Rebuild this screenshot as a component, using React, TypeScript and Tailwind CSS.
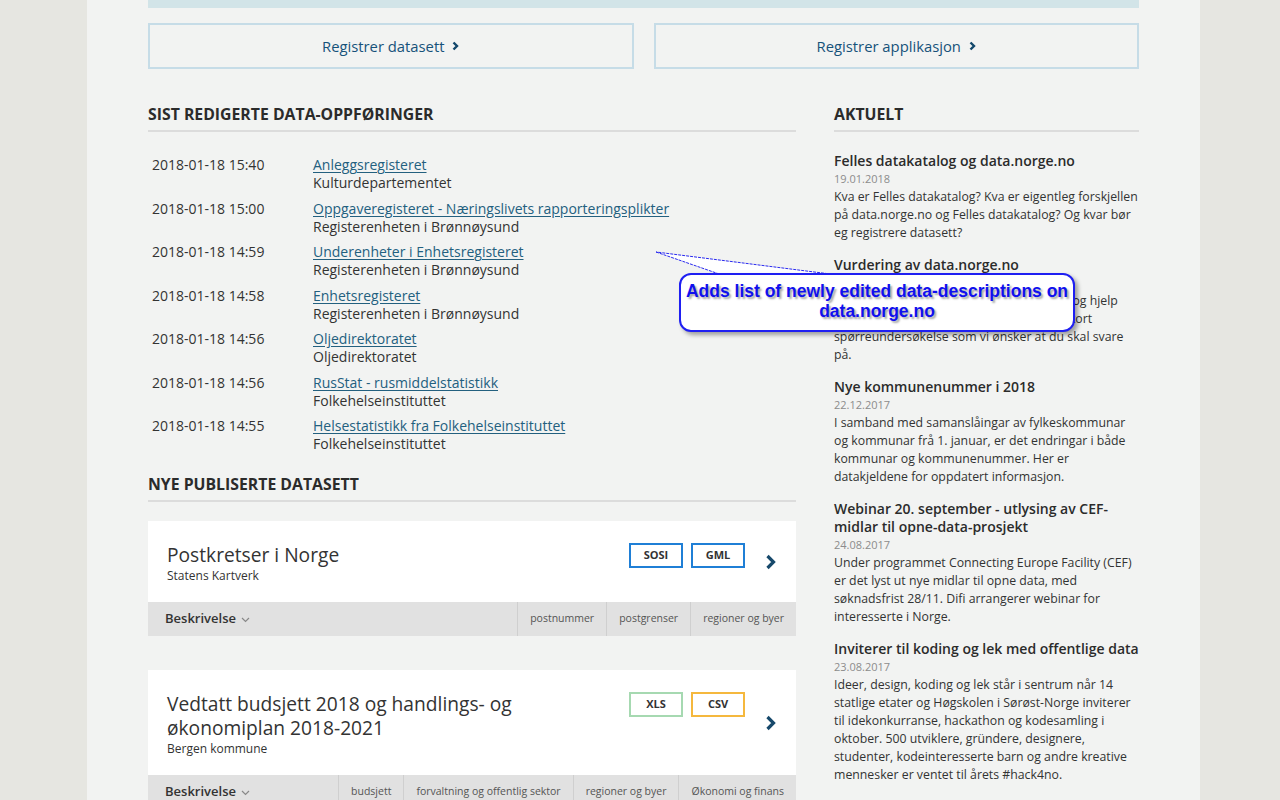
import React from "react";

const recent = [
  ["2018-01-18 15:40", "Anleggsregisteret", "Kulturdepartementet"],
  ["2018-01-18 15:00", "Oppgaveregisteret - Næringslivets rapporteringsplikter", "Registerenheten i Brønnøysund"],
  ["2018-01-18 14:59", "Underenheter i Enhetsregisteret", "Registerenheten i Brønnøysund"],
  ["2018-01-18 14:58", "Enhetsregisteret", "Registerenheten i Brønnøysund"],
  ["2018-01-18 14:56", "Oljedirektoratet", "Oljedirektoratet"],
  ["2018-01-18 14:56", "RusStat - rusmiddelstatistikk", "Folkehelseinstituttet"],
  ["2018-01-18 14:55", "Helsestatistikk fra Folkehelseinstituttet", "Folkehelseinstituttet"],
];

const news = [
  {
    title: "Felles datakatalog og data.norge.no",
    date: "19.01.2018",
    body: "Kva er Felles datakatalog? Kva er eigentleg forskjellen på data.norge.no og Felles datakatalog? Og kvar bør eg registrere datasett?",
  },
  {
    title: "Vurdering av data.norge.no",
    date: "15.01.2018",
    body: "Vi vil gjerne bli betre. Bli med som brukar og hjelp oss å forbetre tenesta ved å svare på ein kort spørreundersøkelse som vi ønsker at du skal svare på.",
  },
  {
    title: "Nye kommunenummer i 2018",
    date: "22.12.2017",
    body: "I samband med samanslåingar av fylkeskommunar og kommunar frå 1. januar, er det endringar i både kommunar og kommunenummer. Her er datakjeldene for oppdatert informasjon.",
  },
  {
    title: "Webinar 20. september - utlysing av CEF-midlar til opne-data-prosjekt",
    date: "24.08.2017",
    body: "Under programmet Connecting Europe Facility (CEF) er det lyst ut nye midlar til opne data, med søknadsfrist 28/11. Difi arrangerer webinar for interesserte i Norge.",
  },
  {
    title: "Inviterer til koding og lek med offentlige data",
    date: "23.08.2017",
    body: "Ideer, design, koding og lek står i sentrum når 14 statlige etater og Høgskolen i Sørøst-Norge inviterer til idekonkurranse, hackathon og kodesamling i oktober. 500 utviklere, gründere, designere, studenter, kodeinteresserte barn og andre kreative mennesker er ventet til årets #hack4no.",
  },
  {
    title: "Nytt datasett frå Statistisk sentralbyrå",
    date: "10.08.2017",
    body: "SSB har publisert nye datasett.",
  },
];

const cards = [
  {
    title: "Postkretser i Norge",
    org: "Statens Kartverk",
    badges: [
      ["SOSI", "border-[#1f7fd6]"],
      ["GML", "border-[#1f7fd6]"],
    ],
    tags: ["postnummer", "postgrenser", "regioner og byer"],
  },
  {
    title: "Vedtatt budsjett 2018 og handlings- og økonomiplan 2018-2021",
    org: "Bergen kommune",
    badges: [
      ["XLS", "border-[#a6d9b1]"],
      ["CSV", "border-[#f5b83d]"],
    ],
    tags: ["budsjett", "forvaltning og offentlig sektor", "regioner og byer", "Økonomi og finans"],
  },
];

function SmallChevron() {
  return (
    <svg width="7" height="10" viewBox="0 0 7 10" className="ml-[8px]">
      <path d="M1.5 1.5 L5 5 L1.5 8.5" fill="none" stroke="#12476b" strokeWidth="2.4" />
    </svg>
  );
}

function Heading({ children }: { children: React.ReactNode }) {
  return (
    <h2 className="text-[15.8px] leading-[22px] font-bold text-[#2b2b2b] pb-[5px] border-b-2 border-[#dcdcdc]">
      {children}
    </h2>
  );
}

export default function App() {
  return (
    <div className="relative min-h-[800px] bg-[#e6e6e1] font-['Open_Sans',sans-serif] text-[#333] overflow-hidden">
      <div className="ml-[87px] w-[1113px] bg-[#f2f3f2] px-[61px] pb-10">
        <div className="h-[8px] bg-[#d2e4e8]" />

        <div className="mt-[15px] grid grid-cols-2 gap-[20px]">
          {["Registrer datasett", "Registrer applikasjon"].map((t) => (
            <a
              key={t}
              className="h-[46px] flex items-center justify-center border-2 border-[#c6dce7] text-[14.8px] text-[#16527a]"
            >
              {t}
              <SmallChevron />
            </a>
          ))}
        </div>

        <div className="mt-[34px] flex gap-[38px]">
          {/* left column */}
          <div className="w-[648px]">
            <Heading>SIST REDIGERTE DATA-OPPFØRINGER</Heading>
            <div className="mt-[24px] flex flex-col gap-[7.5px] text-[14px] leading-[18px]">
              {recent.map(([d, title, org], i) => (
                <div key={i} className="flex">
                  <div className="w-[165px] pl-[4px] text-[#333]">{d}</div>
                  <div>
                    <a className="text-[#23607f] underline underline-offset-[2px] decoration-[#23607f]">{title}</a>
                    <div className="text-[#333]">{org}</div>
                  </div>
                </div>
              ))}
            </div>

            <div className="mt-[20px]">
              <Heading>NYE PUBLISERTE DATASETT</Heading>
            </div>

            <div className="mt-[19px] flex flex-col gap-[34px]">
              {cards.map((c) => (
                <div key={c.title}>
                  <div className="bg-white flex pl-[19px] pr-[19px] pt-[22px] pb-[17px]">
                    <div className="flex-1 pr-[40px]">
                      <div className="text-[19.2px] leading-[24px] text-[#333] max-w-[400px]">{c.title}</div>
                      <div className="text-[12px] leading-[18px] text-[#333]">{c.org}</div>
                    </div>
                    <div className="flex gap-[8px] self-start">
                      {c.badges.map(([b, cls]) => (
                        <div
                          key={b}
                          className={`w-[54px] h-[25px] border-2 ${cls} flex items-center justify-center text-[11px] font-bold text-[#333]`}
                        >
                          {b}
                        </div>
                      ))}
                    </div>
                    <div className="self-center ml-[20px] mb-[5px]">
                      <svg width="12" height="16" viewBox="0 0 12 16">
                        <path d="M2.5 2 L8.5 8 L2.5 14" fill="none" stroke="#17496b" strokeWidth="3.2" />
                      </svg>
                    </div>
                  </div>
                  <div className="h-[34px] bg-[#e1e1e1] flex items-stretch">
                    <div className="flex-1 flex items-center pl-[17px] text-[13px] font-semibold text-[#333]">
                      Beskrivelse
                      <svg width="9" height="6" viewBox="0 0 9 6" className="ml-[5px] mt-[2px]">
                        <path d="M1 1 L4.5 4.5 L8 1" fill="none" stroke="#888" strokeWidth="1.2" />
                      </svg>
                    </div>
                    {c.tags.map((t) => (
                      <div
                        key={t}
                        className="flex items-center px-[12px] border-l border-[#cfcfcf] text-[10.5px] text-[#555]"
                      >
                        {t}
                      </div>
                    ))}
                  </div>
                </div>
              ))}
            </div>
          </div>

          {/* right column */}
          <div className="w-[305px]">
            <Heading>AKTUELT</Heading>
            <div className="mt-[20px] flex flex-col gap-[14px]">
              {news.map((n) => (
                <div key={n.title}>
                  <div className="text-[14px] leading-[18px] font-semibold text-[#2b2b2b]">{n.title}</div>
                  <div className="text-[11px] leading-[18px] text-[#8c8c8c]">{n.date}</div>
                  <div className="text-[12.3px] leading-[18px] text-[#333]">{n.body}</div>
                </div>
              ))}
            </div>
          </div>
        </div>
      </div>

      {/* annotation callout */}
      <svg className="absolute left-[650px] top-[245px]" width="200" height="40" viewBox="0 0 200 40">
        <polygon points="6,7 72,30 188,30" fill="#ffffff" stroke="#2a2af0" strokeWidth="1" strokeDasharray="3 1" />
      </svg>
      <div className="absolute left-[679px] top-[273px] w-[396px] h-[59px] bg-white border-2 border-[#1f1ff2] rounded-[12px] shadow-[3px_3px_4px_rgba(0,0,0,0.35)] flex items-center justify-center text-center font-['Liberation_Sans',Arial,sans-serif] font-bold text-[17.5px] leading-[20px] text-[#1010ee] [text-shadow:2px_2px_2px_rgba(0,0,0,0.35)]">
        <div className="-mt-[3px]">
          Adds list of newly edited data-descriptions on
          <br />
          data.norge.no
        </div>
      </div>
    </div>
  );
}
